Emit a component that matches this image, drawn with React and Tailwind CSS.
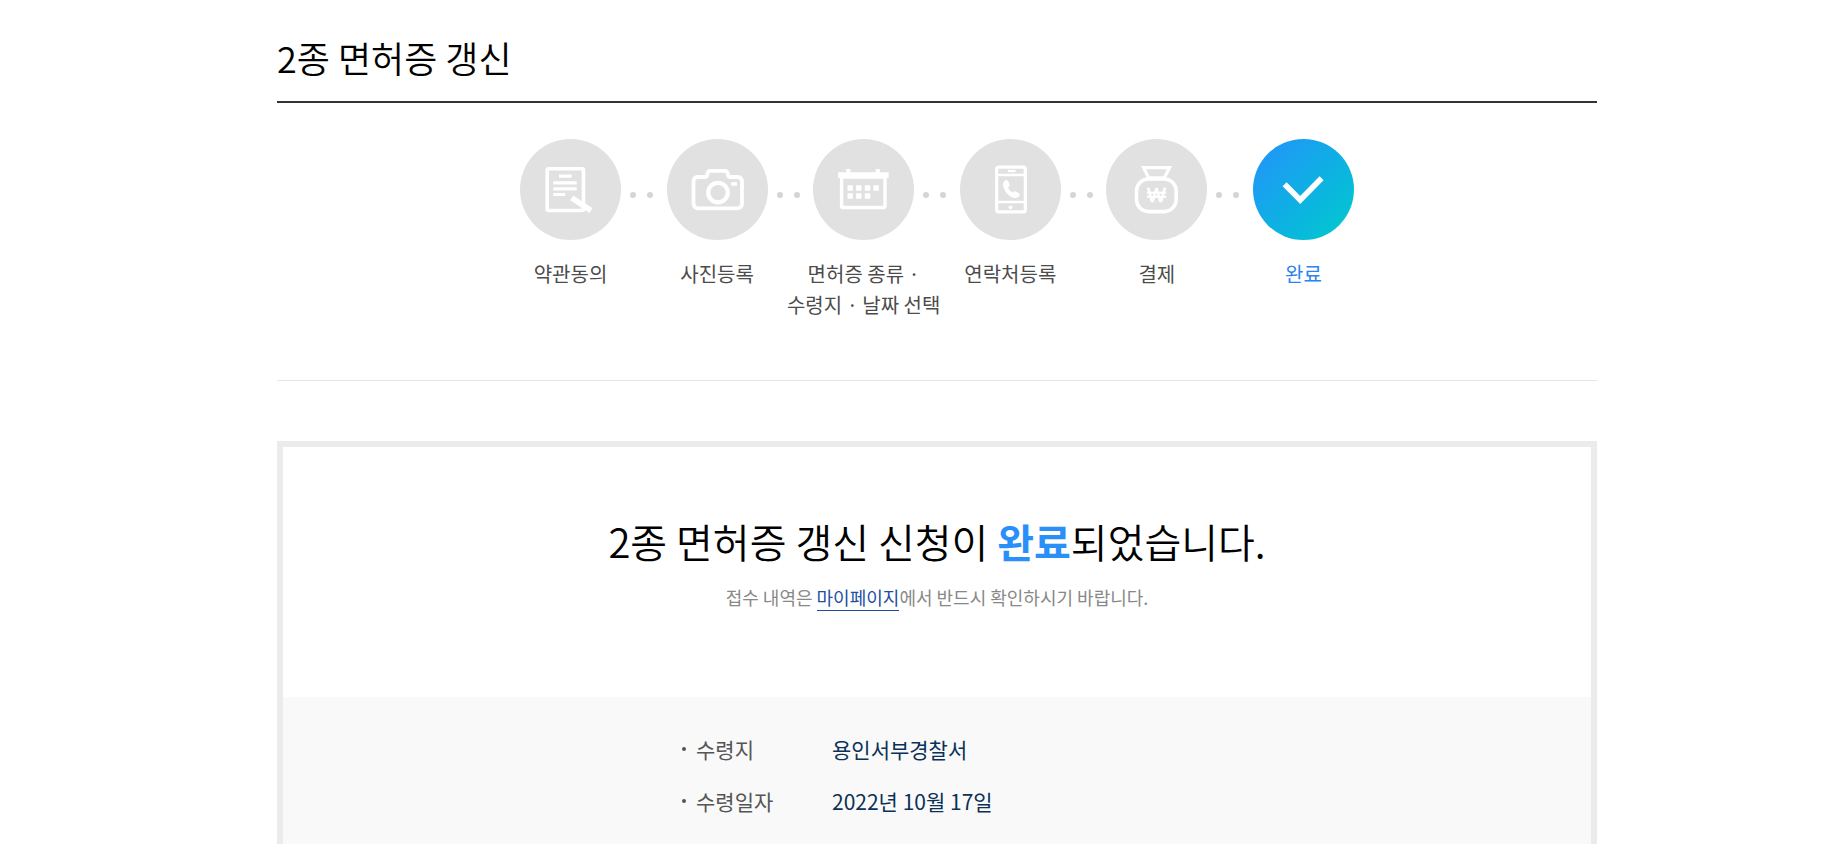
import React from "react";
import clsx from "clsx";

function DocumentIcon() {
  return (
    <>
      <rect x="27.2" y="29.8" width="36.3" height="41.7" rx="1.5" strokeWidth="3.6" />
      <path d="M39 37.2h12.7M33.3 43.8h23.4M33.3 49.8h23.4M33.3 55.5h11.9" strokeWidth="3.2" />
      <path d="M51.8 58.8 71 71.6" strokeWidth="5.6" />
    </>
  );
}

function CameraIcon() {
  return (
    <>
      <path
        d="M31 38h6.5q2.5 0 2.8-2.5.3-3.7 3.2-3.7h14.2q2.900 0 3.200 3.700.3 2.500 2.800 2.500h6.300q5 0 5 5v21.300q0 5-5 5H31.500q-5 0-5-5V43q0-5 4.500-5z"
        strokeWidth="3.8"
      />
      <circle cx="51" cy="53.6" r="9.8" strokeWidth="4.2" />
      <path d="M64.2 45h5.8" strokeWidth="3.6" />
    </>
  );
}

function CalendarIcon() {
  return (
    <>
      <rect x="28.6" y="38" width="43.4" height="30.5" rx="1.5" strokeWidth="3.4" />
      <path d="M25 36.2h50.7" strokeWidth="5.8" />
      <path d="M35.3 30v6M64.8 30v6" strokeWidth="4.2" />
      <path
        d="M34.5 49h5.4M43.1 49h5.4M51.8 49h5.4M60.4 49h5.4M34.5 57h5.4M43.1 57h5.4M51.8 57h5.4"
        strokeWidth="5.4"
      />
    </>
  );
}

function PhoneIcon() {
  return (
    <>
      <rect x="36.7" y="28.2" width="28.6" height="44.7" rx="2" strokeWidth="3.2" />
      <path d="M36 36h30M36 63h30" strokeWidth="2.6" />
      <path d="M47.8 32h7.8" strokeWidth="2.2" />
      <circle cx="50.5" cy="68.3" r="1.9" fill="#fff" stroke="none" />
      <path
        d="M44.3 41.9c1.7-1.6 3.5-1 4.2.8l1.1 2.7c.5 1.5-.1 2.4-1.600 3.200.8 2 2.600 4 4.800 5 1.100-1.400 2.200-1.700 3.400-1l2.300 1.500c1.500 1 1.500 2.500.2 3.700-2.700 2.500-7.600 1.100-11.400-3-4.200-4.500-5.300-10.600-3-12.900z"
        fill="#fff"
        stroke="none"
      />
    </>
  );
}

function MoneyBagIcon() {
  return (
    <>
      <path d="M37.6 28.6h26L58.3 38.8H42.6z" strokeWidth="3.2" />
      <rect x="30.5" y="40" width="39.7" height="32.6" rx="12" strokeWidth="3.6" />
      <text
        x="50.4"
        y="63"
        textAnchor="middle"
        fontFamily="Liberation Sans, sans-serif"
        fontSize="20"
        fill="#fff"
        strokeWidth="0.6"
      >
        ₩
      </text>
    </>
  );
}

function CheckIcon() {
  return <path d="M31.6 45.2 47.2 61 68.6 39.2" strokeWidth="5.6" />;
}

const steps = [
  { lines: ["약관동의"], Icon: DocumentIcon },
  { lines: ["사진등록"], Icon: CameraIcon },
  { lines: ["면허증 종류 ·", "수령지 · 날짜 선택"], Icon: CalendarIcon },
  { lines: ["연락처등록"], Icon: PhoneIcon },
  { lines: ["결제"], Icon: MoneyBagIcon },
  { lines: ["완료"], Icon: CheckIcon, active: true },
];

const details = [
  { label: "수령지", value: "용인서부경찰서" },
  { label: "수령일자", value: "2022년 10월 17일" },
];

function Step({ step }) {
  const { lines, Icon, active } = step;

  return (
    <li
      aria-current={active ? "step" : undefined}
      className="flex w-[101px] shrink-0 flex-col items-center"
    >
      <span
        className={clsx(
          "block size-[101px] rounded-full",
          active ? "bg-linear-135 from-[#2490fb] to-[#06cacb]" : "bg-[#e1e1e1]"
        )}
      >
        <svg viewBox="0 0 101 101" className="size-full" fill="none" stroke="#fff" aria-hidden="true">
          <Icon />
        </svg>
      </span>
      <span
        className={clsx(
          "mt-[18px] text-center text-[20px] leading-[31px] whitespace-nowrap",
          active ? "text-[#2a83f0]" : "text-[#4c4c4c]"
        )}
      >
        {lines.map((line) => (
          <span key={line} className="block">
            {line}
          </span>
        ))}
      </span>
    </li>
  );
}

function StepDots() {
  return (
    <li aria-hidden="true" className="mt-[53px] flex flex-1 gap-[11px] pl-[9px]">
      <span className="size-[6px] rounded-full bg-[#d5d5d5]" />
      <span className="size-[6px] rounded-full bg-[#d5d5d5]" />
    </li>
  );
}

export default function App() {
  return (
    <div className="h-screen overflow-hidden bg-white pl-7 font-['Noto_Sans_CJK_KR',sans-serif]">
      <main className="mx-auto max-w-[1320px]">
        <h1 className="border-b-2 border-[#333] pt-[30px] pb-[17px] text-[36px] leading-[54px] font-[350] text-black">
          2종 면허증 갱신
        </h1>

        <nav aria-label="진행 단계" className="border-b border-[#e5e5e5] pt-9 pb-[60px]">
          <ol className="mx-auto flex max-w-[834px] items-start">
            {steps.map((step, index) => (
              <React.Fragment key={step.lines[0]}>
                {index > 0 && <StepDots />}
                <Step step={step} />
              </React.Fragment>
            ))}
          </ol>
        </nav>

        <section className="mt-[60px] border-[6px] border-[#ebebeb]">
          <div className="pt-[64px] pb-[83px] text-center">
            <h2 className="text-[40px] leading-[60px] font-[350] text-black">
              2종 면허증 갱신 신청이 <strong className="font-bold text-[#2a8ff7]">완료</strong>되었습니다.
            </h2>
            <p className="mt-[9px] text-[18px] leading-[34px] text-[#888]">
              접수 내역은{" "}
              <a href="#mypage" className="border-b border-[#1d4f9f] text-[#1d4f9f]">
                마이페이지
              </a>
              에서 반드시 확인하시기 바랍니다.
            </p>
          </div>

          <div className="bg-[#f9f9f9] pt-[26px] pb-[60px]">
            <dl className="mx-auto max-w-[514px] text-[21px] leading-[52px]">
              {details.map(({ label, value }) => (
                <div key={label} className="flex">
                  <dt className="flex w-[152px] items-center gap-[10px] pl-[2px] text-[#555]">
                    <span className="size-[4px] rounded-full bg-[#555]" />
                    {label}
                  </dt>
                  <dd className="text-[#0b3157]">{value}</dd>
                </div>
              ))}
            </dl>
          </div>
        </section>
      </main>
    </div>
  );
}
